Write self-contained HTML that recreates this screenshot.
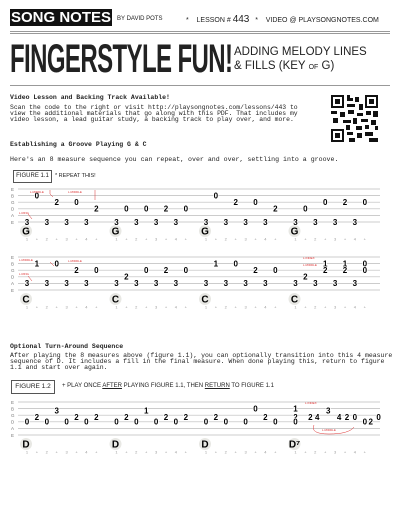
<!DOCTYPE html><html><head><style>
body{margin:0;width:400px;height:525px;background:#fff;overflow:hidden;position:relative;font-family:"Liberation Mono",monospace;color:#222}
.a{position:absolute;white-space:pre}
.p{font-size:6.4px;line-height:5.8px}
.b{font-weight:bold;font-size:6.5px}
.h{font-family:"Liberation Sans",sans-serif;font-weight:bold}
</style></head><body>
<div class="a h" style="left:10px;top:9px;width:102px;height:17px;background:#111;color:#fff;font-size:15px;line-height:17px;text-align:center">SONG NOTES</div>
<div class="a h" style="left:117px;top:16px;font-size:6px;font-weight:normal">BY DAVID POTS</div>
<div class="a h" style="left:186px;top:14px;font-size:7px;font-weight:normal">*&nbsp;&nbsp;&nbsp;&nbsp;LESSON # <span style="font-size:10px">443</span>&nbsp;&nbsp;&nbsp;*&nbsp;&nbsp;&nbsp;&nbsp;VIDEO @ PLAYSONGNOTES.COM</div>
<div class="a" style="left:10px;top:31px;width:380px;height:1px;background:#999"></div>
<div class="a" style="left:10px;top:33px;width:380px;height:1px;background:#999"></div>
<div class="a h" style="left:10px;top:36px;font-size:40px;line-height:46px;transform:scaleX(.6);transform-origin:0 0;letter-spacing:-1px">FINGERSTYLE FUN!</div>
<div class="a h" style="left:234px;top:45px;font-size:11.5px;line-height:14px;font-weight:normal">ADDING MELODY LINES<br>&amp; FILLS (KEY <span style="font-size:7px">OF</span> G)</div>
<div class="a" style="left:10px;top:85px;width:380px;height:1px;background:#999"></div>
<div class="a b" style="left:10px;top:94px">Video Lesson and Backing Track Available!</div>
<div class="a p" style="left:10px;top:105px">Scan the code to the right or visit http://playsongnotes.com/lessons/443 to
view the additional materials that go along with this PDF. That includes my
video lesson, a lead guitar study, a backing track to play over, and more.</div>
<svg class="a" style="left:331px;top:95px" width="47" height="47" viewBox="0 0 47 47">
<rect width="47" height="47" fill="#fff"/>
<g fill="#111"><rect x="0" y="0" width="13" height="13"/><rect x="34" y="0" width="13" height="13"/><rect x="0" y="34" width="13" height="13"/></g>
<g fill="#fff"><rect x="2" y="2" width="9" height="9"/><rect x="36" y="2" width="9" height="9"/><rect x="2" y="36" width="9" height="9"/></g>
<g fill="#111"><rect x="4" y="4" width="5" height="5"/><rect x="38" y="4" width="5" height="5"/><rect x="4" y="38" width="5" height="5"/>
<path d="M16 0h3v3h3v3h-6zM24 2h4v5h-4zM16 9h8v3h-8zM28 9h4v6h-4zM0 16h6v3H0zM9 17h5v5H9zM17 15h6v4h-6zM26 18h6v3h-6zM35 16h5v4h-5zM42 16h5v6h-5zM2 23h5v5H2zM12 25h8v3h-8zM22 23h4v6h-4zM30 24h7v3h-7zM40 25h5v5h-5zM15 30h4v5h-4zM25 31h6v4h-6zM34 30h4v4h-4zM16 37h6v3h-6zM26 38h5v5h-5zM34 37h8v4h-8zM18 43h6v4h-6zM38 43h9v4h-9zM44 31h3v4h-3z"/></g></svg>
<div class="a b" style="left:10px;top:141px">Establishing a Groove Playing G &amp; C</div>
<div class="a p" style="left:10px;top:157px;font-size:6.6px">Here's an 8 measure sequence you can repeat, over and over, settling into a groove.</div>
<div class="a h" style="left:13px;top:170px;width:37px;height:11px;border:1px solid #555;font-size:6px;font-weight:normal;line-height:11px;text-align:center">FIGURE 1.1</div>
<div class="a h" style="left:55px;top:173px;font-size:5.5px;font-weight:normal">* REPEAT THIS!</div>
<div class="a b" style="left:10px;top:343px">Optional Turn-Around Sequence</div>
<div class="a p" style="left:10px;top:353px;font-size:6.5px">After playing the 8 measures above (figure 1.1), you can optionally transition into this 4 measure
sequence of D. It includes a fill in the final measure. When done playing this, return to figure
1.1 and start over again.</div>
<div class="a h" style="left:11px;top:380px;width:42px;height:12px;border:1px solid #555;font-size:6.5px;font-weight:normal;line-height:12px;text-align:center">FIGURE 1.2</div>
<div class="a h" style="left:62px;top:383px;font-size:6px;font-weight:normal">+ PLAY ONCE <u>AFTER</u> PLAYING FIGURE 1.1, THEN <u>RETURN</u> TO FIGURE 1.1</div>
<svg id="s" class="a" style="left:0;top:0" width="400" height="525"></svg>
<script>
var s='',F='font-family="Liberation Sans,sans-serif"';
function staff(y0,meas,ch){
 var L='EBGDAE';
 for(var i=0;i<6;i++){var y=y0+i*6.6;s+='<line x1="18" x2="380" y1="'+y+'" y2="'+y+'" stroke="#bbb" stroke-width=".7"/><text x="11" y="'+(y+1.8)+'" font-size="4.5" fill="#777" '+F+'>'+L[i]+'</text>';}
 for(var m=0;m<4;m++){var x0=27+m*89.5;
  for(var k=0;k<8;k++){s+='<text x="'+(x0+k*9.9)+'" y="'+(y0+51.5)+'" font-size="4" fill="#999" text-anchor="middle" '+F+'>'+['1','+','2','+','3','+','4','+'][k]+'</text>';}
  s+='<circle cx="'+(x0-1)+'" cy="'+(y0+42)+'" r="6" fill="#e8e8e4"/><text x="'+(x0-1)+'" y="'+(y0+45.5)+'" font-size="10" font-weight="bold" text-anchor="middle" '+F+'>'+ch[m]+'</text>';
  meas[m].forEach(function(n){var y=y0+n[1]*6.6;s+='<text x="'+(x0+n[0]*9.9)+'" y="'+(y+2.8)+'" font-size="8" font-weight="bold" text-anchor="middle" '+F+' stroke="#fff" stroke-width="1.5" paint-order="stroke">'+n[2]+'</text>';});
 }}
var g1=[[1,1,'0'],[3,2,'2'],[5,2,'0'],[7,3,'2'],[0,5,'3'],[2,5,'3'],[4,5,'3'],[6,5,'3']];
var g2=[[1,3,'0'],[3,3,'0'],[5,3,'2'],[7,3,'0'],[0,5,'3'],[2,5,'3'],[4,5,'3'],[6,5,'3']];
staff(189,[g1,g2,g1,[[1,3,'0'],[3,2,'0'],[5,2,'2'],[7,2,'0'],[0,5,'3'],[2,5,'3'],[4,5,'3'],[6,5,'3']]],['G','G','G','G']);
var c1=[[1,1,'1'],[3,1,'0'],[5,2,'2'],[7,2,'0'],[0,4,'3'],[2,4,'3'],[4,4,'3'],[6,4,'3']];
var c2=[[1,3,'2'],[3,2,'0'],[5,2,'2'],[7,2,'0'],[0,4,'3'],[2,4,'3'],[4,4,'3'],[6,4,'3']];
staff(257,[c1,c2,c1,[[1,3,'2'],[3,1,'1'],[3,2,'2'],[5,1,'1'],[5,2,'2'],[7,1,'0'],[7,2,'0'],[0,4,'3'],[2,4,'3'],[4,4,'3'],[6,4,'3']]],['C','C','C','C']);
function d(t){return [[0,3,'0'],[1,2.3,'2'],[2,3,'0'],[3,1.3,t],[4,3,'0'],[5,2.3,'2'],[6,3,'0'],[7,2.3,'2']];}
staff(402,[d('3'),d('1'),[[0,3,'0'],[1,2.3,'2'],[2,3,'0'],[4,3,'0'],[5,1,'0'],[6,2.3,'2'],[7,3,'0']],
 [[0,1,'1'],[0,2.3,'2'],[0,3,'0'],[1.5,2.3,'2'],[2.2,2.3,'4'],[3.3,1.3,'3'],[4.4,2.3,'4'],[5.2,2.3,'2'],[6,2.3,'0'],[7,3,'0'],[7.6,3,'2'],[8.4,2.3,'0']]],['D','D','D','D⁷']);
var r='#d33';
s+='<g fill="'+r+'" font-size="3" '+F+'><text x="30" y="193">L.MIDDLE</text><text x="68" y="193">L.MIDDLE</text><text x="19" y="214">L.RING</text><text x="19" y="261">L.MIDDLE</text><text x="68" y="262">L.MIDDLE</text><text x="19" y="275">L.RING</text><text x="303" y="259">L.INDEX</text><text x="303" y="266">L.MIDDLE</text><text x="305" y="404">L.INDEX</text><text x="322" y="431">L.MIDDLE</text></g>';
s+='<g fill="none" stroke="'+r+'" stroke-width=".5"><path d="M28 214l4 5M50 190v4l3 3M95 190v10M28 276l4 5M50 262l4 4"/><path d="M314 425q-4 9 15 9q20 0 25-7"/></g>';
document.getElementById('s').innerHTML=s;
</script>
</body></html>
